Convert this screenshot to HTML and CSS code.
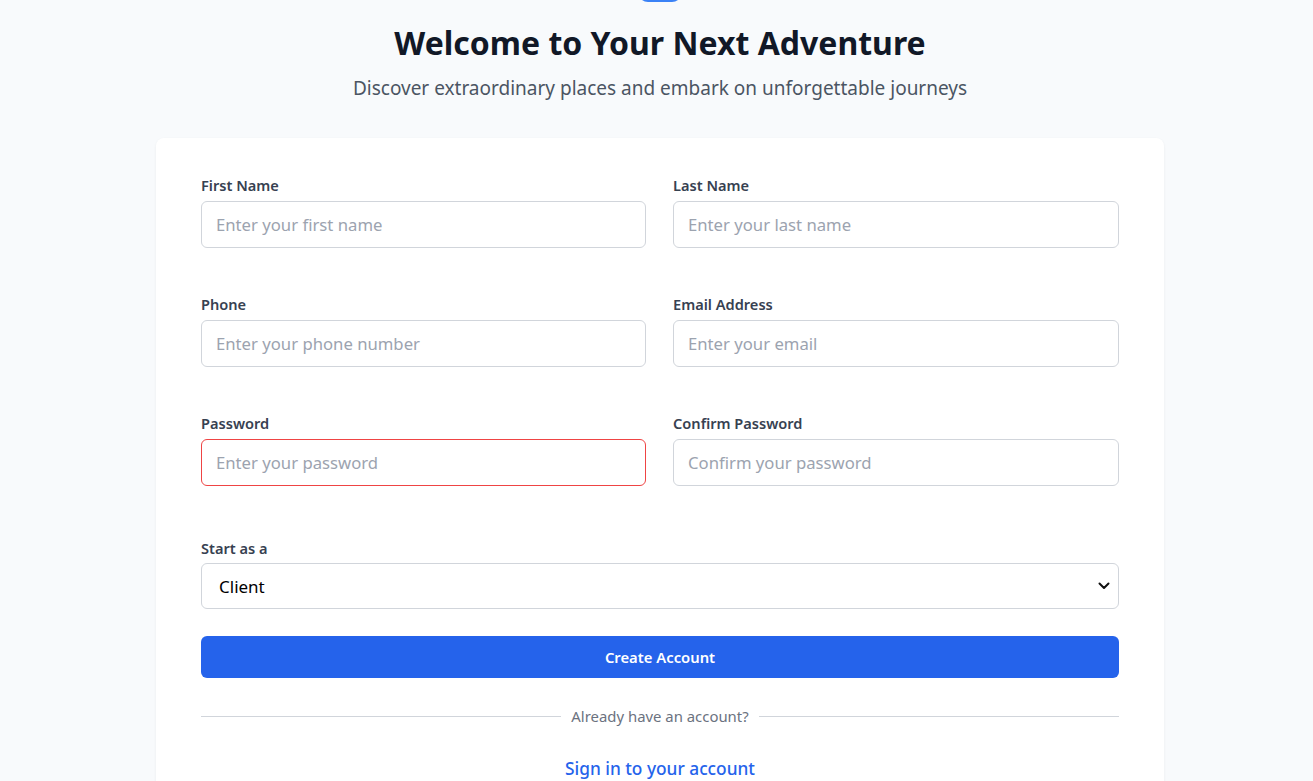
FILE: index.html
```html
<!DOCTYPE html>
<html lang="en">
<head>
<meta charset="utf-8">
<title>Create Account</title>
<link rel="stylesheet" href="styles.css">
</head>
<body>
<main class="page">
  <header class="intro">
    <div class="logo"></div>
    <h1 class="title">Welcome to Your Next Adventure</h1>
    <p class="subtitle">Discover extraordinary places and embark on unforgettable journeys</p>
  </header>
  <section class="card">
    <form class="form">
      <div class="grid">
        <div class="field">
          <label class="label">First Name</label>
          <input class="input" type="text" placeholder="Enter your first name">
        </div>
        <div class="field">
          <label class="label">Last Name</label>
          <input class="input" type="text" placeholder="Enter your last name">
        </div>
        <div class="field">
          <label class="label">Phone</label>
          <input class="input" type="tel" placeholder="Enter your phone number">
        </div>
        <div class="field">
          <label class="label">Email Address</label>
          <input class="input" type="email" placeholder="Enter your email">
        </div>
        <div class="field">
          <label class="label">Password</label>
          <input class="input input-error" type="password" placeholder="Enter your password">
        </div>
        <div class="field">
          <label class="label">Confirm Password</label>
          <input class="input" type="password" placeholder="Confirm your password">
        </div>
      </div>
      <div class="field role">
        <label class="label">Start as a</label>
        <div class="select-wrap">
          <select class="select">
            <option>Client</option>
            <option>Guide</option>
          </select>
          <svg class="chevron" width="12" height="8" viewBox="0 0 12 8" aria-hidden="true"><path d="M1.5 1.5 L6 6 L10.5 1.5" fill="none" stroke="#111" stroke-width="2" stroke-linecap="round" stroke-linejoin="round"/></svg>
        </div>
      </div>
      <button class="submit" type="button">Create Account</button>
      <div class="divider"><span class="line"></span><span class="divider-text">Already have an account?</span><span class="line"></span></div>
      <a class="signin" href="#">Sign in to your account</a>
    </form>
  </section>
</main>
</body>
</html>
```

FILE: styles.css
```css
* { box-sizing: border-box; }
html, body { margin: 0; padding: 0; }
body {
  background: #f8fafc;
  font-family: "Noto Sans", "Open Sans", Arial, sans-serif;
  color: #111827;
  overflow: hidden;
  padding-left: 7px;
}
.page {
  width: 1008px;
  margin: 0 auto;
}
.intro {
  display: flex;
  flex-direction: column;
  align-items: center;
}
.logo {
  width: 44px;
  height: 48px;
  margin-top: -46px;
  border-radius: 10px;
  background: #3b82f6;
}
.title {
  margin: 21px 0 0;
  font-size: 32px;
  line-height: 40px;
  font-weight: 700;
  color: #111827;
}
.subtitle {
  margin: 11px 0 0;
  font-size: 19px;
  line-height: 28px;
  color: #4b5563;
}
.card {
  margin-top: 36px;
  background: #fff;
  border-radius: 8px;
  box-shadow: 0 1px 3px rgba(15, 23, 42, 0.06);
  padding: 37px 45px 40px;
}
.form { display: flex; flex-direction: column; }
.grid {
  display: grid;
  grid-template-columns: 445px 446px;
  column-gap: 27px;
  row-gap: 46px;
}
.field { display: flex; flex-direction: column; }
.label {
  font-size: 14.6px;
  line-height: 20px;
  font-weight: 600;
  color: #374151;
  margin-bottom: 6px;
}
.input {
  height: 47px;
  border: 1px solid #d1d5db;
  border-radius: 6px;
  padding: 0 14px;
  font-family: inherit;
  font-size: 16.7px;
  color: #111827;
  background: #fff;
  outline: none;
}
.input::placeholder { color: #9ca3af; }
.input-error { border-color: #ef4444; }
.role { margin-top: 52px; }
.role .label { margin-bottom: 5px; }
.select-wrap { position: relative; }
.select {
  width: 100%;
  height: 46px;
  appearance: none;
  -webkit-appearance: none;
  border: 1px solid #d1d5db;
  border-radius: 6px;
  padding: 0 17px;
  font-family: inherit;
  font-size: 17px;
  color: #000;
  background: #fff;
  outline: none;
}
.chevron {
  position: absolute;
  right: 9px;
  top: 19px;
  pointer-events: none;
}
.submit {
  margin-top: 27px;
  height: 42px;
  border: none;
  border-radius: 6px;
  background: #2563eb;
  color: #fff;
  font-family: inherit;
  font-size: 14.8px;
  font-weight: 600;
}
.divider {
  margin-top: 28px;
  display: flex;
  align-items: center;
  gap: 10px;
}
.line { flex: 1; height: 1px; background: #d1d5db; }
.divider-text {
  font-size: 14.9px;
  line-height: 20px;
  color: #6b7280;
}
.signin {
  margin-top: 29px;
  align-self: center;
  font-size: 17.3px;
  line-height: 28px;
  font-weight: 500;
  color: #2563eb;
  text-decoration: none;
}
```
